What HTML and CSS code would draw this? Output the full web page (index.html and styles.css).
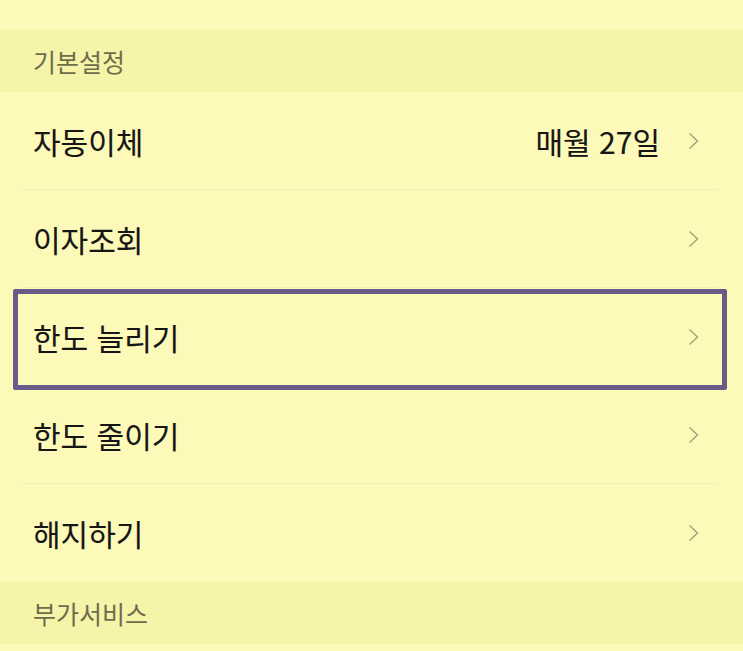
FILE: index.html
```html
<!DOCTYPE html>
<html lang="ko">
<head>
  <meta charset="UTF-8">
  <meta name="viewport" content="width=device-width, initial-scale=1.0">
  <title>설정</title>
  <link rel="stylesheet" href="styles.css">
</head>
<body>
  <div class="top-space"></div>

  <!-- 기본설정 -->
  <div class="section-header">기본설정</div>
  <ul class="menu">
    <li class="menu-item">
      <span class="label">자동이체</span>
      <span class="value">매월 27일</span>
      <svg class="chevron" viewBox="0 0 11 18"><polyline points="1.5,1.5 9.5,9 1.5,16.5"/></svg>
    </li>
    <li class="menu-item">
      <span class="label">이자조회</span>
      <svg class="chevron" viewBox="0 0 11 18"><polyline points="1.5,1.5 9.5,9 1.5,16.5"/></svg>
    </li>
    <li class="menu-item highlight">
      <span class="label">한도 늘리기</span>
      <svg class="chevron" viewBox="0 0 11 18"><polyline points="1.5,1.5 9.5,9 1.5,16.5"/></svg>
    </li>
    <li class="menu-item">
      <span class="label">한도 줄이기</span>
      <svg class="chevron" viewBox="0 0 11 18"><polyline points="1.5,1.5 9.5,9 1.5,16.5"/></svg>
    </li>
    <li class="menu-item last">
      <span class="label">해지하기</span>
      <svg class="chevron" viewBox="0 0 11 18"><polyline points="1.5,1.5 9.5,9 1.5,16.5"/></svg>
    </li>
  </ul>

  <!-- 부가서비스 -->
  <div class="section-header">부가서비스</div>
  <div class="bottom-space"></div>
</body>
</html>
```

FILE: styles.css
```css
body {
  margin: 0;
  background-color: #fdfab9;
  font-family: "Noto Sans CJK KR", "Noto Sans", sans-serif;
  overflow: hidden;
}

.top-space {
  height: 30px;
  background-color: #fcf9b9;
}

.section-header {
  height: 62px;
  display: flex;
  align-items: center;
  padding-left: 33px;
  background-color: #f5f4a8;
  color: #6f6c4c;
  font-size: 25px;
}

.menu {
  list-style: none;
  margin: 0;
  padding: 0;
}

.menu-item {
  position: relative;
  height: 97px;
  margin: 0 24px 0 23px;
  padding: 0 20px 0 10px;
  display: flex;
  align-items: center;
  border-bottom: 1px solid #f3efb2;
  color: #161616;
  font-size: 30px;
  -webkit-text-stroke: 0.15px #161616;
}

.menu-item.last {
  border-bottom: none;
  height: 98px;
}

.label {
  flex: 1;
}

.value {
  margin-right: 28px;
}

.chevron {
  width: 11px;
  height: 18px;
  fill: none;
  stroke: #a3a277;
  stroke-width: 1.4;
}

/* highlighted item frame */
.highlight::after {
  content: "";
  position: absolute;
  left: -10px;
  right: -8px;
  top: 1px;
  bottom: -5px;
  border: 5px solid #695a8a;
  border-radius: 2px;
}

.bottom-space {
  height: 10px;
}
```
